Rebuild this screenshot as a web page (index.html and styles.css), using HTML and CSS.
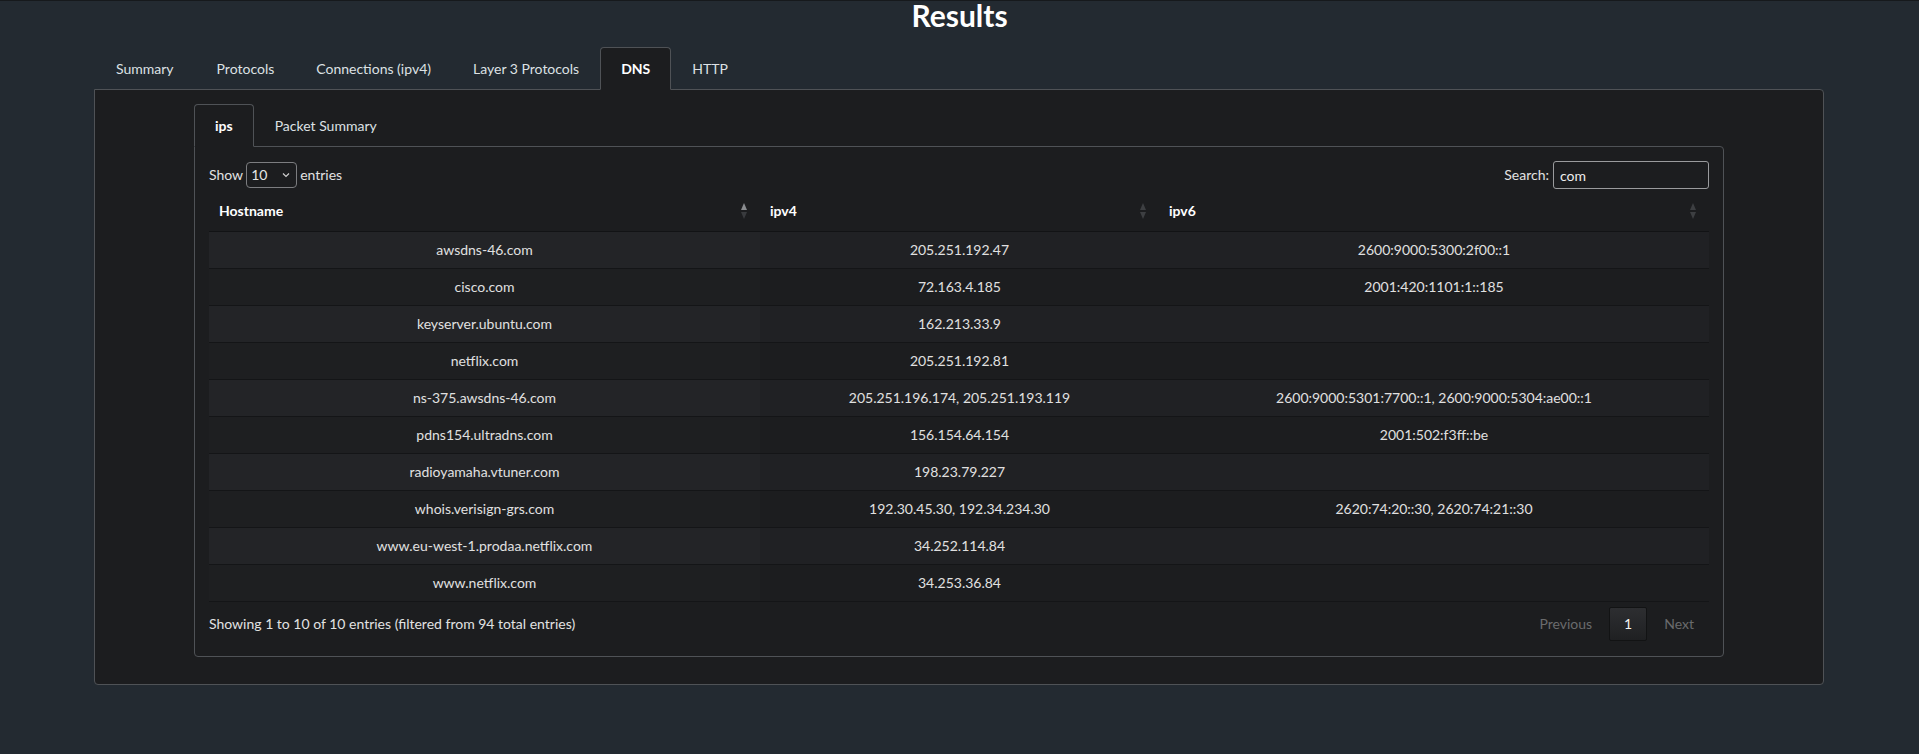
FILE: index.html
```html
<!DOCTYPE html>
<html lang="en">
<head>
<meta charset="utf-8">
<title>Results</title>
<link rel="stylesheet" href="styles.css">
</head>
<body>
<h1 class="title">Results</h1>
<div class="wrap">
  <ul class="tabs">
    <li class="tab">Summary</li>
    <li class="tab">Protocols</li>
    <li class="tab">Connections (ipv4)</li>
    <li class="tab">Layer 3 Protocols</li>
    <li class="tab active">DNS</li>
    <li class="tab">HTTP</li>
  </ul>
  <div class="panel">
    <ul class="tabs">
      <li class="tab active">ips</li>
      <li class="tab">Packet Summary</li>
    </ul>
    <div class="inner">
      <div class="controls">
        <label class="length">Show
          <span class="select-wrap">
            <select class="select"><option>10</option><option>25</option><option>50</option><option>100</option></select>
            <svg class="chev" width="8" height="6" viewBox="0 0 8 6"><path d="M1 1.5 L4 4.5 L7 1.5" fill="none" stroke="#cfcfcf" stroke-width="1.2"/></svg>
          </span>
          entries</label>
        <label class="search">Search: <input class="search-input" type="text" value="com"></label>
      </div>
      <table class="grid">
        <colgroup><col class="c1"><col class="c2"><col class="c3"></colgroup>
        <thead>
          <tr>
            <th class="sorted-asc">Hostname<span class="sort"></span></th>
            <th>ipv4<span class="sort"></span></th>
            <th>ipv6<span class="sort"></span></th>
          </tr>
        </thead>
        <tbody>
          <tr><td>awsdns-46.com</td><td>205.251.192.47</td><td>2600:9000:5300:2f00::1</td></tr>
          <tr><td>cisco.com</td><td>72.163.4.185</td><td>2001:420:1101:1::185</td></tr>
          <tr><td>keyserver.ubuntu.com</td><td>162.213.33.9</td><td></td></tr>
          <tr><td>netflix.com</td><td>205.251.192.81</td><td></td></tr>
          <tr><td>ns-375.awsdns-46.com</td><td>205.251.196.174, 205.251.193.119</td><td>2600:9000:5301:7700::1, 2600:9000:5304:ae00::1</td></tr>
          <tr><td>pdns154.ultradns.com</td><td>156.154.64.154</td><td>2001:502:f3ff::be</td></tr>
          <tr><td>radioyamaha.vtuner.com</td><td>198.23.79.227</td><td></td></tr>
          <tr><td>whois.verisign-grs.com</td><td>192.30.45.30, 192.34.234.30</td><td>2620:74:20::30, 2620:74:21::30</td></tr>
          <tr><td>www.eu-west-1.prodaa.netflix.com</td><td>34.252.114.84</td><td></td></tr>
          <tr><td>www.netflix.com</td><td>34.253.36.84</td><td></td></tr>
        </tbody>
      </table>
      <div class="footer">
        <div class="info">Showing 1 to 10 of 10 entries (filtered from 94 total entries)</div>
        <div class="paging">
          <span class="pbtn disabled">Previous</span>
          <span class="pbtn current">1</span>
          <span class="pbtn disabled">Next</span>
        </div>
      </div>
    </div>
  </div>
</div>
</body>
</html>
```
FILE: styles.css
```css
html, body {
  margin: 0;
  padding: 0;
}
body {
  background: #232a31;
  border-top: 1px solid #16191c;
  font-family: Lato, "Noto Sans", sans-serif;
  font-size: 14px;
  line-height: 20px;
  color: #e2e2e2;
  min-height: 753px;
}
.title {
  margin: 0 0 18px;
  font-size: 30px;
  line-height: 28px;
  font-weight: 700;
  color: #ffffff;
  text-align: center;
}
.wrap {
  margin-left: 94px;
  width: 1730px;
}
.tabs {
  list-style: none;
  margin: 0 0 -1px;
  padding: 0 0 0 1px;
  display: flex;
  position: relative;
  z-index: 1;
}
.tab {
  padding: 11px 20px 10px;
  border: 1px solid transparent;
  border-bottom: 1px solid transparent;
  border-radius: 4px 4px 0 0;
  color: #dde1e4;
  white-space: nowrap;
}
.tab:first-child {
  padding-right: 21px;
}
.tab.active {
  background: #1c1d1f;
  border-color: #4f5256;
  border-bottom-color: #1c1d1f;
  font-weight: 700;
  color: #ffffff;
}
.panel {
  background: #1c1d1f;
  border: 1px solid #4f5256;
  border-radius: 0 4px 4px 4px;
  padding: 14px 99px 27px;
}
.panel .tabs {
  padding-left: 0;
}
.panel .tab:first-child {
  padding-right: 20px;
}
.inner {
  border: 1px solid #4f5256;
  border-radius: 0 4px 4px 4px;
  padding: 14px 14px 15px;
}
.controls {
  display: flex;
  justify-content: space-between;
  align-items: flex-start;
  height: 29px;
}
.length {
  display: flex;
  align-items: center;
  gap: 3px;
  height: 27px;
  color: #e2e2e2;
}
.select-wrap {
  position: relative;
  display: inline-block;
  height: 26px;
}
.select {
  -webkit-appearance: none;
  appearance: none;
  width: 51px;
  height: 26px;
  box-sizing: border-box;
  background: #1c1d1f;
  border: 1px solid #7c7d80;
  border-radius: 4px;
  color: #e6e6e6;
  font-family: Lato, "Noto Sans", sans-serif;
  font-size: 14px;
  padding: 0 0 0 4px;
  margin: 0;
  outline: none;
}
.chev {
  position: absolute;
  right: 7px;
  top: 10px;
  pointer-events: none;
}
.search {
  display: flex;
  align-items: center;
  gap: 4px;
  height: 28px;
  color: #e2e2e2;
}
.search-input {
  width: 156px;
  height: 28px;
  box-sizing: border-box;
  background: #1c1d1f;
  border: 1px solid #9a9b9d;
  border-radius: 3px;
  color: #eeeeee;
  font-family: Lato, "Noto Sans", sans-serif;
  font-size: 14px;
  padding: 0 6px;
  margin: 0;
  outline: none;
}
.grid {
  width: 1500px;
  table-layout: fixed;
  border-collapse: collapse;
  border-spacing: 0;
  margin-top: 1px;
}
.c1 { width: 551px; }
.c2 { width: 399px; }
.c3 { width: 550px; }
.grid th {
  position: relative;
  text-align: left;
  font-weight: 700;
  color: #ffffff;
  padding: 10px 18px 10px 10px;
  height: 20px;
  border-bottom: 1px solid #121315;
}
.sort {
  position: absolute;
  right: 12px;
  top: 12px;
  width: 7px;
  height: 16px;
}
.sort::before,
.sort::after {
  content: "";
  position: absolute;
  left: 0;
  width: 0;
  height: 0;
  border-left: 3.5px solid transparent;
  border-right: 3.5px solid transparent;
}
.sort::before {
  top: 0;
  border-bottom: 7px solid #3d3f42;
}
.sort::after {
  top: 9px;
  border-top: 7px solid #3d3f42;
}
.sorted-asc .sort::before {
  border-bottom-color: #8a8c8f;
}
.sorted-asc .sort::after {
  border-top-color: #393b3e;
}
.grid td {
  text-align: center;
  padding: 8px 10px;
  height: 20px;
  border-bottom: 1px solid #141517;
  color: #e0e0e0;
  white-space: nowrap;
}
.grid tbody tr:nth-child(odd) td {
  background: #202124;
}
.grid tbody tr:nth-child(odd) td:first-child {
  background: #232427;
}
.grid tbody tr:nth-child(even) td {
  background: #1c1d1f;
}
.grid tbody tr:nth-child(even) td:first-child {
  background: #1e1f21;
}
.footer {
  display: flex;
  justify-content: space-between;
  align-items: center;
  margin-top: 5px;
  height: 34px;
}
.info {
  color: #e2e2e2;
}
.paging {
  display: flex;
  align-items: center;
}
.pbtn {
  display: inline-block;
  padding: 6px 14px;
  line-height: 20px;
  border: 1px solid transparent;
  border-radius: 2px;
  margin-left: 2px;
}
.pbtn.disabled {
  color: #6a6b6d;
}
.pbtn.current {
  color: #f2f2f2;
  border-color: #121314;
  background: linear-gradient(to bottom, #2d2e31 0%, #1f2022 100%);
}
```
